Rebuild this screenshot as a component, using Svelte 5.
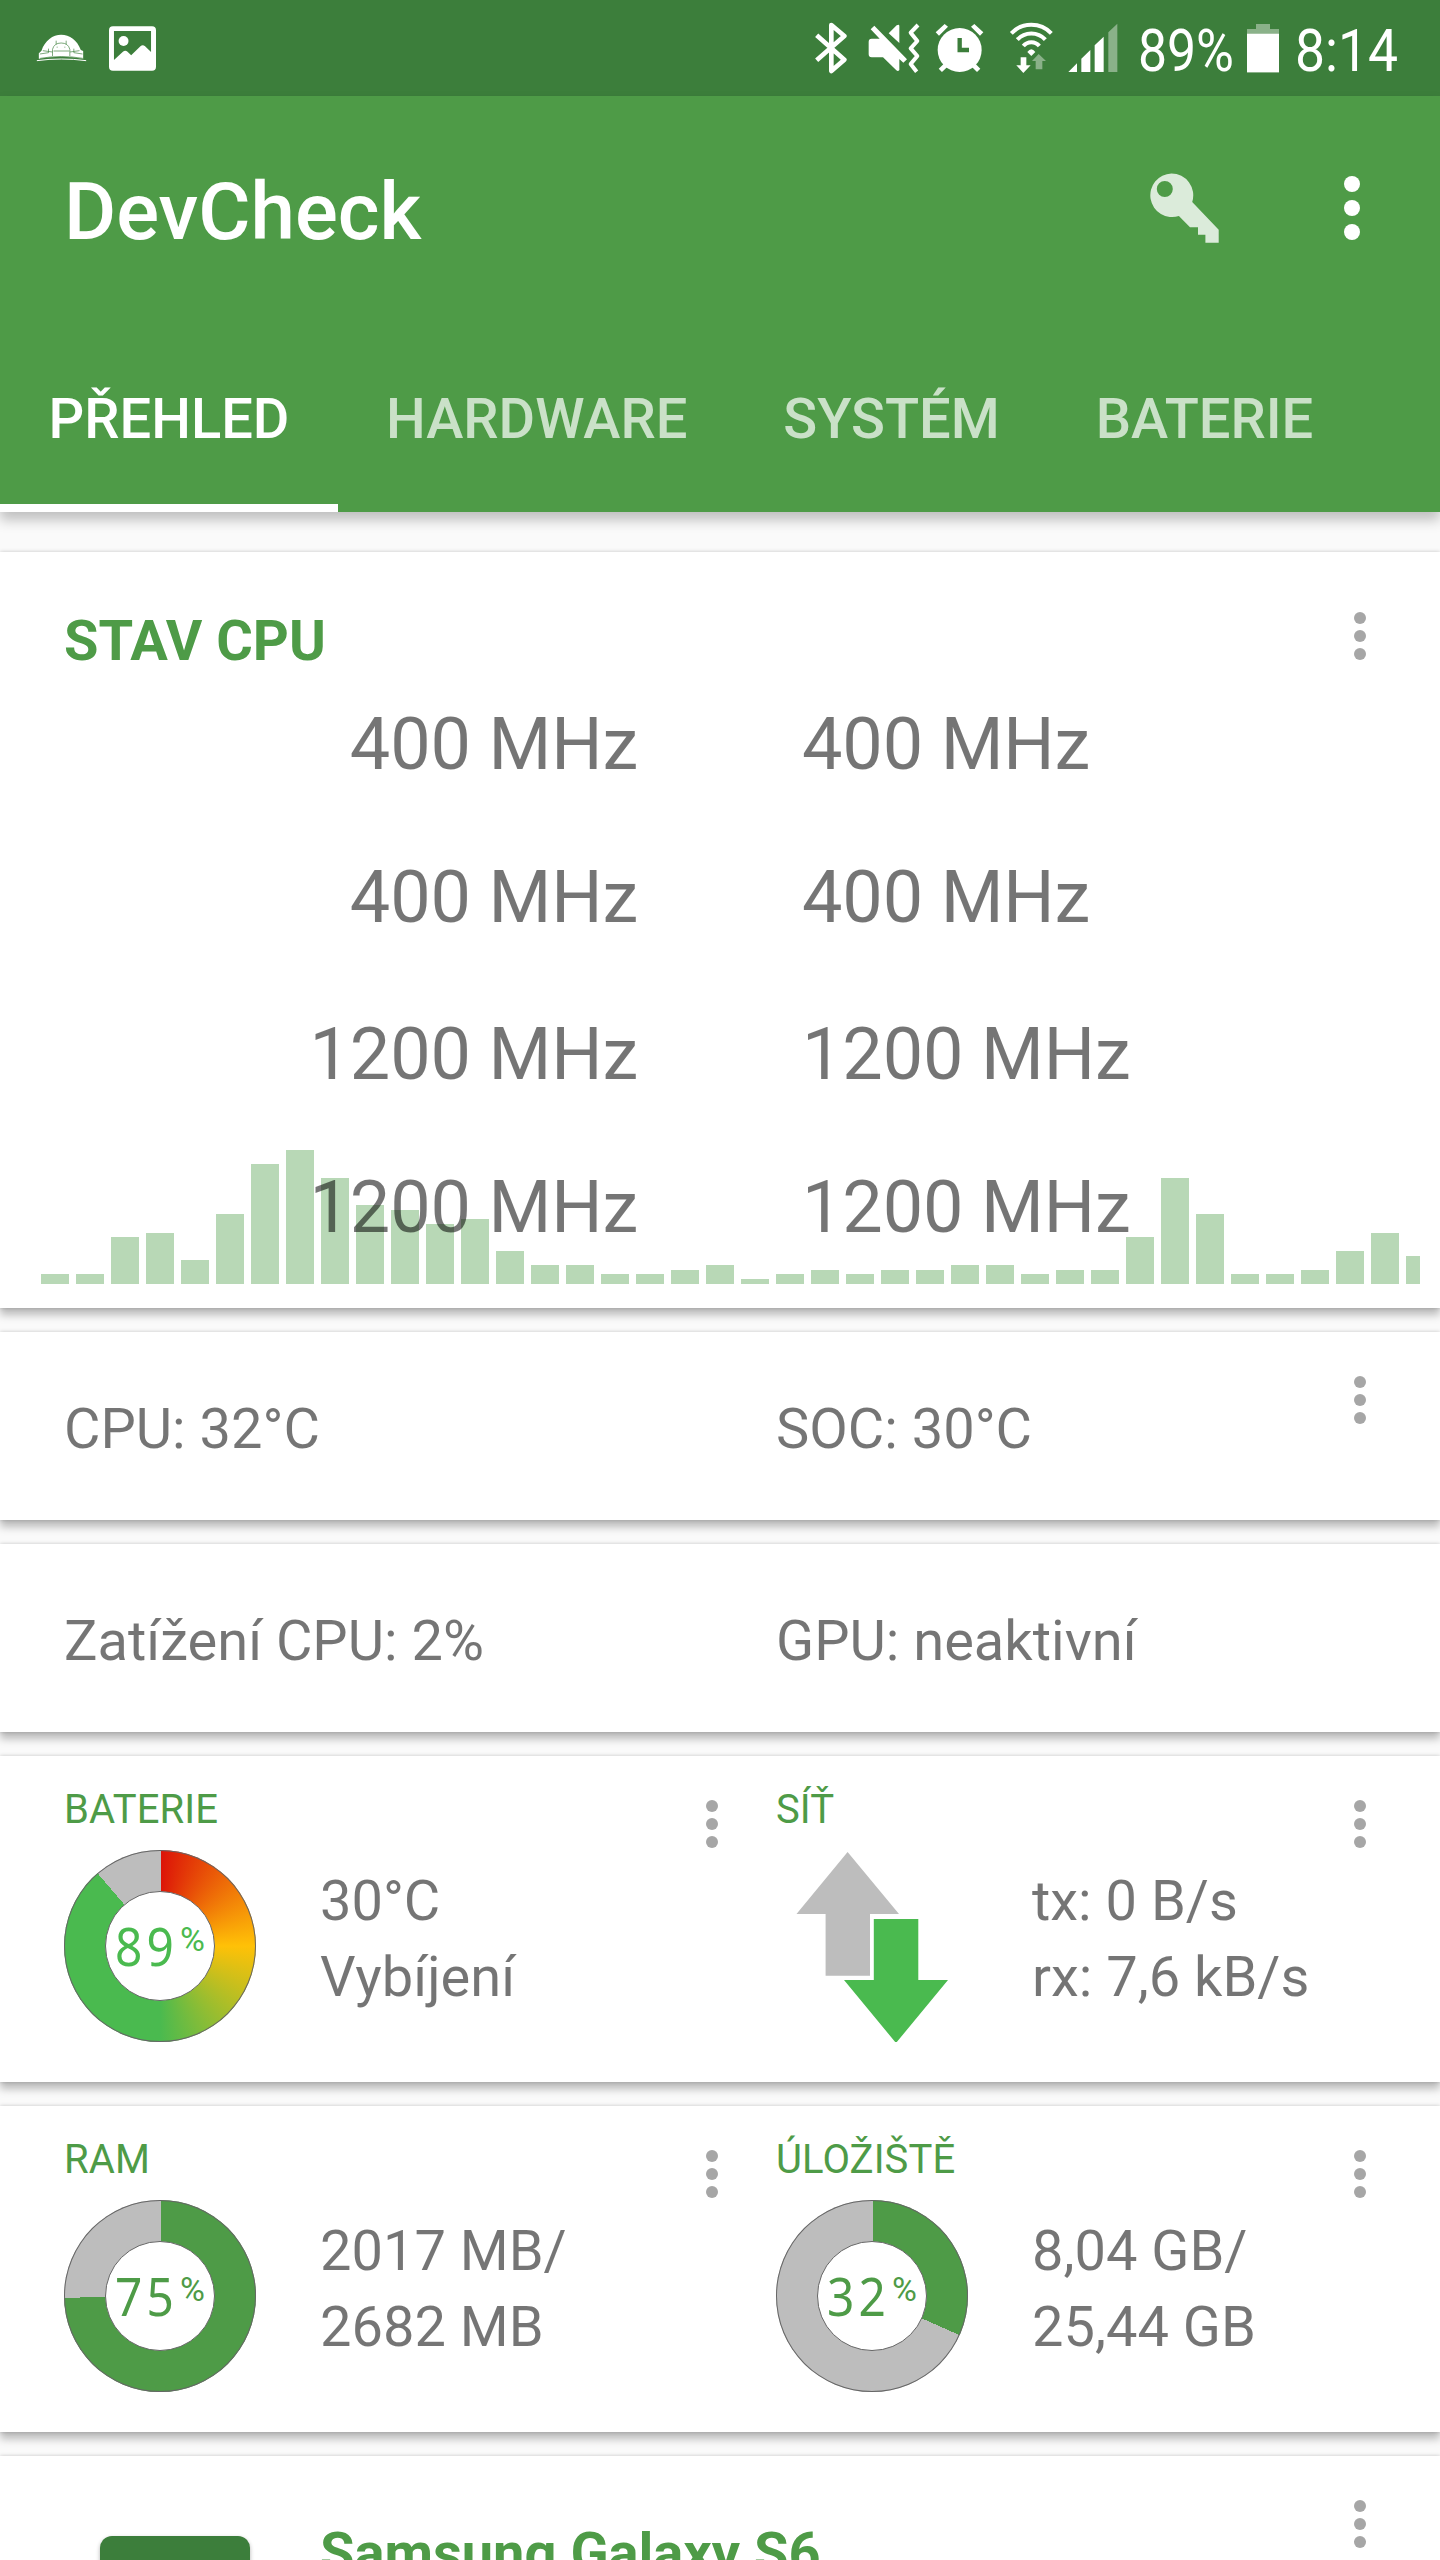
<!-- App.svelte -->
<script>
    let tabs = ["PŘEHLED", "HARDWARE", "SYSTÉM", "BATERIE"];
    let active = $state(0);

    let cores = [
        ["400 MHz", "400 MHz"],
        ["400 MHz", "400 MHz"],
        ["1200 MHz", "1200 MHz"],
        ["1200 MHz", "1200 MHz"],
    ];

    // CPU load history, bar heights in px
    let history = [
        10, 10, 47, 51, 24, 70, 120, 134, 106, 79, 74, 60, 65, 33, 19, 19, 10,
        10, 14, 19, 5, 10, 14, 10, 14, 14, 19, 19, 10, 14, 14, 47, 106, 70, 10,
        10, 14, 33, 51, 28,
    ];

    let battery = { value: 89, lines: ["30°C", "Vybíjení"] };
    let network = ["tx: 0 B/s", "rx: 7,6 kB/s"];
    let usage = [
        { title: "RAM", value: 75, lines: ["2017 MB/", "2682 MB"] },
        { title: "ÚLOŽIŠTĚ", value: 32, lines: ["8,04 GB/", "25,44 GB"] },
    ];

    const GREY = "#bdbdbd";

    // the arc starts about one degree past the top
    function solidRing(value) {
        const end = value - 0.3;
        return `conic-gradient(${GREY} 0.2%, #4e9b47 0.2% ${end}%, ${GREY} ${end}%)`;
    }

    function heatRing(value) {
        const end = value - 0.3;
        return `conic-gradient(${GREY} 0.2%, #dc1408 0.2%, #ffc107 25%, #4aba4f 50%, #4aba4f ${end}%, ${GREY} ${end}%)`;
    }
</script>

{#snippet dots()}
    <button class="dots" aria-label="menu">
        <i></i><i></i><i></i>
    </button>
{/snippet}

{#snippet ring(value, background, bright)}
    <div class="ring" style:background>
        <div class="hole" class:bright>
            <span class="num">{value}</span><span class="pct">%</span>
        </div>
    </div>
{/snippet}

<div class="screen">
    <div class="status">
        <svg class="dome" viewBox="108 102 152 84" width="51" height="28">
            <path d="M124 152 C134 121 158 104 183 104 C208 104 232 121 242 150 L249 153 V176 Q183 164 116 176 V160 Z" fill="#fff" />
            <path d="M110 182 Q183 172 258 182" fill="none" stroke="#fff" stroke-width="3" />
            <g fill="none" stroke="#3c7e3b" stroke-width="2">
                <path d="M157 168 V148 Q162 129 183 129 Q204 129 209 148 V168 M168 133 V122 M198 133 V122" />
                <path d="M160 153 H207 M119 162 L145 158 V146 M247 162 L221 158 V146 M120 175 Q183 164 248 175 M128 152 L157 156 M238 152 L209 156" />
                <path d="M171 140 V143 M194 140 V143" />
            </g>
        </svg>
        <svg class="photo" viewBox="328 75 142 135" width="47" height="45">
            <path fill="#fff" fill-rule="evenodd" d="M340 75 H458 Q470 75 470 87 V198 Q470 210 458 210 H340 Q328 210 328 198 V87 Q328 75 340 75 Z M343 90 V177 L370 152 Q377 146 384 152 L395 163 L423 136 Q430 129 437 136 L455 153 V90 Z" />
            <circle cx="372" cy="120" r="15" fill="#fff" />
        </svg>

        <div class="spacer"></div>

        <svg class="bt" viewBox="44 36 96 156" width="32" height="52">
            <path d="M49 76 L132 149 L93 183 V45 L132 78 L49 151" fill="none" stroke="#fff" stroke-width="14" stroke-linejoin="round" />
        </svg>
        <svg class="mute" viewBox="202 36 156 156" width="52" height="52">
            <path fill="#fff" d="M213 86 H237 L210 58 L221 47 L319 148 L308 158 L296 147 V180 Q292 186 287 181 L247 142 H213 Q204 142 204 133 V95 Q204 86 213 86 Z M264 70 L288 46 Q296 42 296 48 V99 Z" />
            <path d="M352 45 L330 68 L350 93 L330 115 L350 138 L330 162 L348 185" fill="none" stroke="#fff" stroke-width="12" stroke-linejoin="round" />
        </svg>
        <svg class="alarm" viewBox="402 36 147 156" width="49" height="52">
            <circle cx="476" cy="120" r="66" fill="#fff" />
            <path d="M404 67 L431 42 L441 50 L414 77 Z M547 67 L520 42 L510 50 L537 77 Z" fill="#fff" />
            <path d="M418 181 L438 162 M533 181 L514 162" stroke="#fff" stroke-width="14" />
            <path d="M476 84 V120 H504" fill="none" stroke="#3c7e3b" stroke-width="13" />
        </svg>
        <svg class="wifi" viewBox="625 36 135 156" width="45" height="52">
            <g fill="none" stroke="#fff" stroke-width="12">
                <path d="M632 70 A83 83 0 0 1 752 70" />
                <path d="M650 89 A57 57 0 0 1 734 89" />
                <path d="M668 108 A31 31 0 0 1 716 108" />
            </g>
            <path d="M680 126 Q692 110 704 126 L692 138 Z" fill="#fff" />
            <path d="M660 142 H677 V166 H690 L668 189 L647 166 H660 Z" fill="#fff" />
            <path d="M714 132 L736 153 H725 V178 H705 V153 H694 Z" fill="#fff" opacity="0.4" />
        </svg>
        <svg class="signal" viewBox="803 36 150 156" width="50" height="52">
            <path d="M804 186 L830 160 V186 Z M843 186 V146 L870 120 V186 Z M883 186 V106 L910 80 V186 Z" fill="#fff" />
            <path d="M924 186 V67 L951 41 V186 Z" fill="#fff" opacity="0.4" />
        </svg>
        <svg class="level" width="104" height="72">
            <text x="4" y="59" textLength="96" lengthAdjust="spacingAndGlyphs">89%</text>
        </svg>
        <svg class="cell" viewBox="1341 36 96 156" width="32" height="52">
            <path d="M1341 57 H1368 V42 H1410 V57 H1437 V189 H1341 Z" fill="#fff" opacity="0.4" />
            <path d="M1341 71 H1437 V186 H1341 Z" fill="#fff" />
        </svg>
        <svg class="clock" width="112" height="72">
            <text x="4" y="59" textLength="103" lengthAdjust="spacingAndGlyphs">8:14</text>
        </svg>
    </div>

    <header>
        <div class="toolbar">
            <h1>DevCheck</h1>
            <svg viewBox="0 0 71 71" width="71" height="71">
                <g fill="#fff" opacity="0.8">
                    <path fill-rule="evenodd" d="M22.4 0.5 A21.8 21.8 0 0 1 43.2 29 L69.7 56.7 V69.7 H56.4 V61.7 H49 V54.3 H41 L29.9 43 A21.8 21.8 0 1 1 22.4 0.5 Z M15.8 8 A8 8 0 1 0 15.8 24 A8 8 0 1 0 15.8 8 Z" />
                </g>
            </svg>
            <button class="dots big" aria-label="menu">
                <i></i><i></i><i></i>
            </button>
        </div>
        <nav>
            {#each tabs as tab, i}
                <button
                    class="tab"
                    class:active={i === active}
                    onclick={() => (active = i)}
                >
                    {tab}
                </button>
            {/each}
        </nav>
    </header>

    <main>
        <section class="card cpu">
            <h2>STAV CPU</h2>
            {@render dots()}
            <div class="history">
                {#each history as h}
                    <span style:height="{h}px"></span>
                {/each}
            </div>
            <div class="cores">
                {#each cores as row}
                    <div class="row">
                        <span>{row[0]}</span>
                        <span>{row[1]}</span>
                    </div>
                {/each}
            </div>
        </section>

        <section class="card line">
            <span>CPU: 32°C</span>
            <span>SOC: 30°C</span>
            {@render dots()}
        </section>

        <section class="card line">
            <span>Zatížení CPU: 2%</span>
            <span>GPU: neaktivní</span>
        </section>

        <section class="card pair">
            <div class="half">
                <h3>BATERIE</h3>
                <div class="body">
                    {@render ring(battery.value, heatRing(battery.value), true)}
                    <div class="lines">
                        {#each battery.lines as line}
                            <div>{line}</div>
                        {/each}
                    </div>
                </div>
                {@render dots()}
            </div>
            <div class="half">
                <h3>SÍŤ</h3>
                <div class="body">
                    <svg viewBox="0 0 192 192" width="192" height="192">
                        <path d="M71.6 2 L123 64 H94 V125.7 H49.6 V64 H20.5 Z" fill="#bdbdbd" />
                        <path d="M97.8 69 H142.3 V130 H172 L120 193 L68 130 H97.8 Z" fill="#4aba4f" />
                    </svg>
                    <div class="lines">
                        {#each network as line}
                            <div>{line}</div>
                        {/each}
                    </div>
                </div>
                {@render dots()}
            </div>
        </section>

        <section class="card pair">
            {#each usage as item}
                <div class="half">
                    <h3>{item.title}</h3>
                    <div class="body">
                        {@render ring(item.value, solidRing(item.value), false)}
                        <div class="lines">
                            {#each item.lines as line}
                                <div>{line}</div>
                            {/each}
                        </div>
                    </div>
                    {@render dots()}
                </div>
            {/each}
        </section>

        <section class="card device">
            <div class="phone"></div>
            <h2>Samsung Galaxy S6</h2>
            {@render dots()}
        </section>
    </main>
</div>

<style>
    :global(body) {
        margin: 0;
        background: #fafafa;
    }

    .screen {
        width: 1440px;
        height: 2560px;
        overflow: hidden;
        display: flex;
        flex-direction: column;
        background: #fafafa;
        color: rgba(0, 0, 0, 0.54);
        font-family: Roboto, "Liberation Sans", sans-serif;
        font-size: 56px;
    }

    h1,
    h2,
    h3 {
        margin: 0;
    }

    button {
        border: none;
        background: none;
        padding: 0;
        font: inherit;
    }

    svg {
        display: block;
        flex: none;
    }

    /* status bar */
    .status {
        height: 96px;
        flex: none;
        box-sizing: border-box;
        padding: 0 37px 0 36px;
        display: flex;
        align-items: center;
        background: #3c7e3b;
    }

    .status text {
        font-size: 60px;
        fill: #fff;
    }

    .photo {
        margin-left: 22px;
    }

    .spacer {
        flex: 1;
    }

    .mute {
        margin-left: 21px;
    }

    .alarm {
        margin-left: 15px;
    }

    .wifi {
        margin-left: 25px;
    }

    .signal {
        margin-left: 14px;
    }

    .level {
        margin-left: 16px;
    }

    .cell {
        margin-left: 9px;
    }

    .clock {
        margin-left: 12px;
    }

    /* header */
    header {
        position: relative;
        z-index: 2;
        flex: none;
        height: 416px;
        background: #4e9b47;
        color: #fff;
        box-shadow: 0 8px 12px rgba(0, 0, 0, 0.24);
    }

    .toolbar {
        height: 224px;
        box-sizing: border-box;
        padding: 0 80px 0 64px;
        display: flex;
        align-items: center;
    }

    h1 {
        flex: 1;
        padding-top: 8px;
        font-size: 80px;
        line-height: 100px;
        font-weight: 500;
    }

    nav {
        display: flex;
        height: 192px;
    }

    .tab {
        box-sizing: border-box;
        padding: 6px 48px 0;
        border-bottom: 8px solid transparent;
        border-top: 8px solid transparent;
        color: rgba(255, 255, 255, 0.7);
        font-weight: 500;
        line-height: 66px;
    }

    .tab:first-child {
        width: 338px;
    }

    .tab.active {
        color: #fff;
        border-bottom-color: #fff;
    }

    .dots {
        position: absolute;
        top: 44px;
        right: 74px;
        display: flex;
        flex-direction: column;
        gap: 6px;
    }

    .dots i {
        width: 12px;
        height: 12px;
        border-radius: 50%;
        background: #a6a6a6;
    }

    .dots.big {
        position: static;
        margin-left: 124px;
        gap: 8px;
    }

    .dots.big i {
        width: 16px;
        height: 16px;
        background: #fff;
    }

    /* cards */
    main {
        display: flex;
        flex-direction: column;
        gap: 24px;
        padding-top: 40px;
    }

    .card {
        position: relative;
        flex: none;
        background: #fff;
        box-shadow:
            0 7px 8px rgba(0, 0, 0, 0.25),
            0 0 4px rgba(0, 0, 0, 0.2);
    }

    h2 {
        color: #4e9b47;
        font-size: 56px;
        font-weight: 700;
    }

    .cpu {
        height: 756px;
        box-sizing: border-box;
        padding-top: 62px;
    }

    .cpu h2 {
        padding-left: 64px;
        line-height: 54px;
    }

    .cpu .dots {
        top: 60px;
    }

    /* sits behind the core clocks */
    .history {
        position: absolute;
        left: 41px;
        right: 20px;
        bottom: 24px;
        height: 134px;
        display: flex;
        align-items: flex-end;
        gap: 7px;
        overflow: hidden;
    }

    .history span {
        flex: none;
        width: 28px;
        background: #b8d8b6;
    }

    .cores {
        position: relative;
        font-size: 72px;
        line-height: 153px;
        letter-spacing: -0.15px;
    }

    .row {
        display: grid;
        grid-template-columns: 638px 1fr;
        column-gap: 164px;
    }

    .row span:first-child {
        text-align: right;
    }

    .row:nth-child(3) {
        margin-top: 4px;
    }

    .line {
        height: 188px;
        box-sizing: border-box;
        padding: 6px 0 0 64px;
        display: grid;
        grid-template-columns: 712px 1fr;
        align-items: center;
    }

    .pair {
        height: 326px;
        display: grid;
        grid-template-columns: 786px 1fr;
    }

    .half {
        position: relative;
        padding: 30px 0 0 64px;
    }

    .half + .half {
        padding-left: 0;
        margin-left: -10px;
    }

    .half:first-child .dots {
        right: 68px;
    }

    h3 {
        color: #4e9b47;
        font-size: 40px;
        line-height: 48px;
        font-weight: 400;
        letter-spacing: 0.1px;
    }

    .body {
        display: flex;
        gap: 64px;
        margin-top: 16px;
    }

    .lines {
        padding-top: 13px;
        line-height: 76px;
    }

    .ring {
        width: 192px;
        height: 192px;
        box-sizing: border-box;
        border-radius: 50%;
        display: flex;
        align-items: center;
        justify-content: center;
        box-shadow: inset 0 0 0 1px #666;
    }

    .hole {
        width: 110px;
        height: 110px;
        box-sizing: border-box;
        border: 1px solid #666;
        border-radius: 50%;
        display: flex;
        padding-left: 9px;
        background: #fff;
        color: #4e9b47;
    }

    .hole.bright {
        color: #4aba4f;
    }

    /* narrow, evenly spaced digits */
    .num {
        width: 62px;
        font-family: "Noto Sans", sans-serif;
        font-size: 52px;
        line-height: 107px;
        letter-spacing: 4.4px;
        transform: scaleX(0.92);
        transform-origin: left;
    }

    .pct {
        margin-left: 3px;
        font-size: 34px;
        line-height: 94px;
    }

    .device {
        height: 300px;
        display: flex;
        padding-left: 100px;
    }

    .device h2 {
        margin: 64px 0 0 70px;
        line-height: 66px;
    }

    .phone {
        width: 150px;
        height: 220px;
        margin-top: 80px;
        border-radius: 12px;
        background: #3c7e3b;
        box-shadow: 0 2px 4px rgba(0, 0, 0, 0.3);
    }
</style>
